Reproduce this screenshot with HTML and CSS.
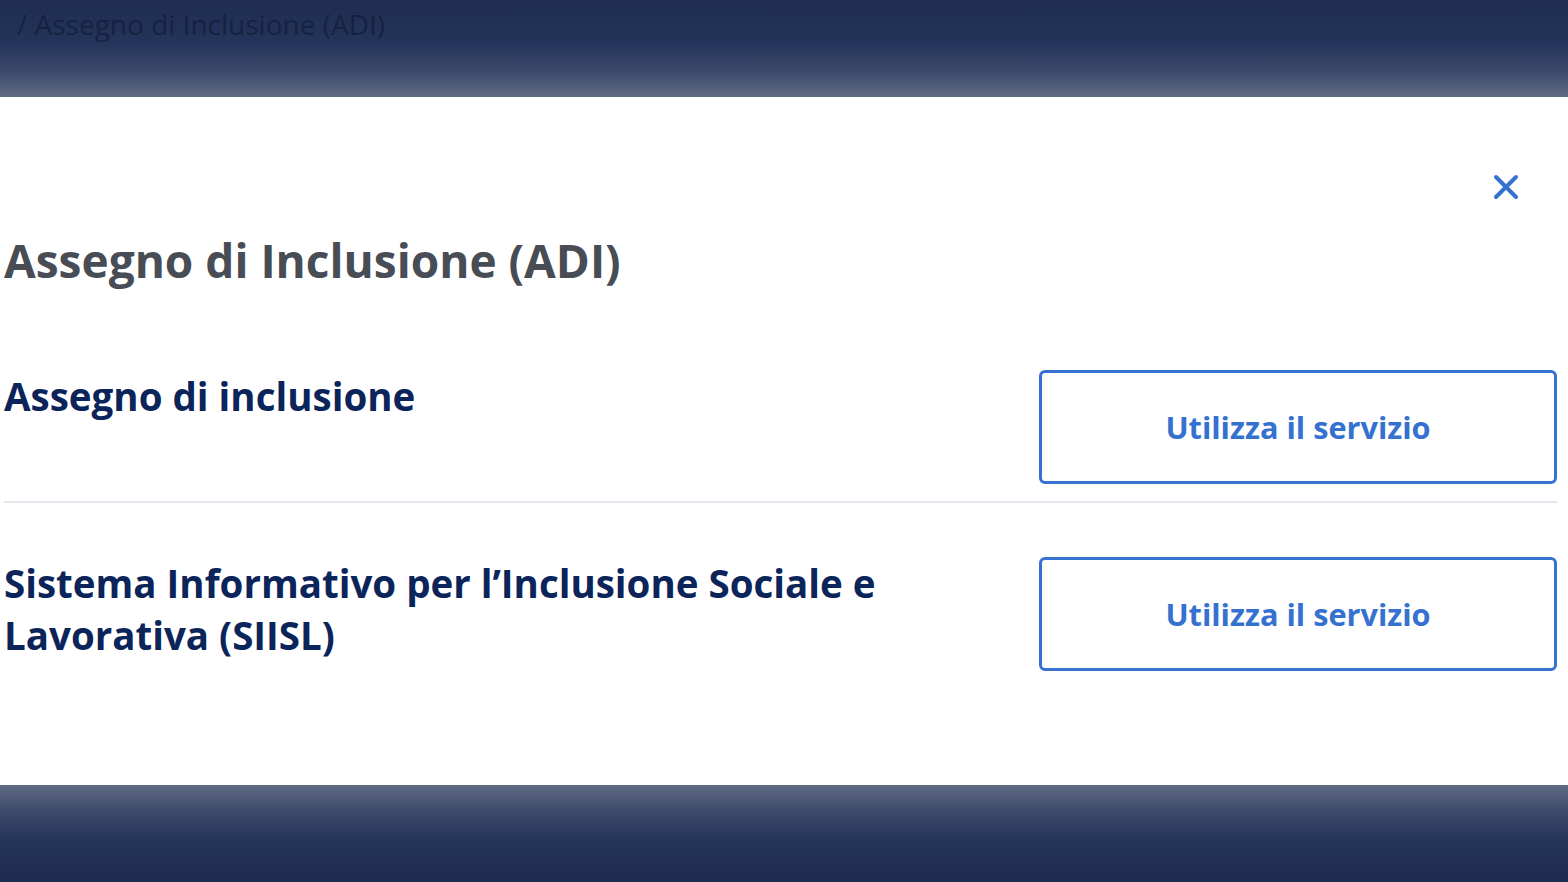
FILE: index.html
```html
<!DOCTYPE html>
<html lang="it">
<head>
<meta charset="utf-8">
<title>Assegno di Inclusione (ADI)</title>
<link rel="stylesheet" href="styles.css">
</head>
<body>
<header class="backdrop backdrop-top">
  <p class="crumb">/ Assegno di Inclusione (ADI)</p>
</header>
<main class="modal">
  <div class="modal-head">
    <button class="close" aria-label="Chiudi">
      <svg viewBox="0 0 26 26" width="26" height="26"><path d="M3 3 L23 23 M23 3 L3 23" stroke="#3571cf" stroke-width="4" stroke-linecap="round" fill="none"/></svg>
    </button>
  </div>
  <h1 class="modal-title">Assegno di Inclusione (ADI)</h1>
  <ul class="services">
    <li class="service">
      <h2 class="service-name">Assegno di inclusione</h2>
      <a class="btn" href="#">Utilizza il servizio</a>
    </li>
    <li class="service">
      <h2 class="service-name">Sistema Informativo per l’Inclusione Sociale e Lavorativa (SIISL)</h2>
      <a class="btn" href="#">Utilizza il servizio</a>
    </li>
  </ul>
</main>
<footer class="backdrop backdrop-bottom"></footer>
</body>
</html>
```
FILE: styles.css
```css
html, body {
  margin: 0;
  padding: 0;
}
body {
  height: 882px;
  overflow: hidden;
  display: flex;
  flex-direction: column;
  background: #1c2c4f;
  font-family: "Open Sans", "Roboto", sans-serif;
}
.backdrop {
  height: 97px;
  flex: 0 0 97px;
}
.backdrop-top {
  background: linear-gradient(180deg, #1e2d50 0%, #24345a 45%, #3e4b6b 75%, #5f6b85 100%);
}
.backdrop-bottom {
  background: linear-gradient(180deg, #5f6b85 0%, #3f4c6c 25%, #26355a 55%, #1c2b4e 100%);
}
.crumb {
  margin: 0;
  padding: 4px 0 0 17px;
  font-size: 28px;
  line-height: 40px;
  color: rgba(14, 24, 48, 0.6);
}
.modal {
  flex: 0 0 688px;
  height: 688px;
  box-sizing: border-box;
  background: #ffffff;
  padding: 0 11px 0 4px;
}
.modal-head {
  display: flex;
  justify-content: flex-end;
  padding-top: 77px;
}
.close {
  width: 26px;
  height: 26px;
  padding: 0;
  margin-right: 38px;
  border: 0;
  background: none;
  display: flex;
}
.modal-title {
  margin: 31px 0 27px;
  font-size: 46px;
  line-height: 58px;
  font-weight: 700;
  color: #474c55;
}
.services {
  list-style: none;
  margin: 0;
  padding: 0;
}
.service {
  display: flex;
  justify-content: space-between;
  align-items: flex-start;
  gap: 40px;
  padding: 54px 0 17px;
}
.service:first-child {
  border-bottom: 2px solid #e2e7ee;
}
.service-name {
  margin: 0;
  max-width: 930px;
  font-size: 38.5px;
  line-height: 52px;
  font-weight: 700;
  color: #0b2459;
}
.btn {
  flex: 0 0 518px;
  height: 114px;
  box-sizing: border-box;
  border: 3px solid #3571cf;
  border-radius: 6px;
  display: flex;
  align-items: center;
  justify-content: center;
  font-size: 30.7px;
  font-weight: 700;
  color: #3571cf;
  text-decoration: none;
}
```
